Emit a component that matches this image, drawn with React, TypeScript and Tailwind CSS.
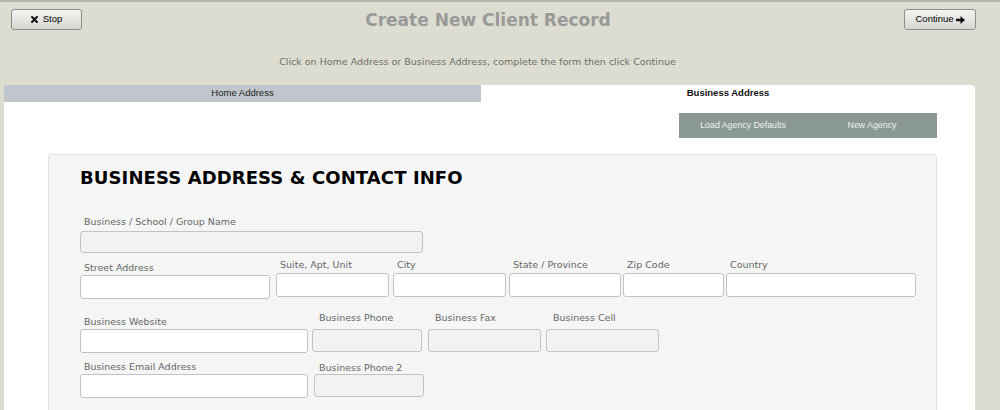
import React from 'react';

const verdana = "font-['Verdana','DejaVu_Sans',sans-serif]";
const arial = "font-['Liberation_Sans',Arial,sans-serif]";

const Field: React.FC<{
  label: string;
  w: string;
  gray?: boolean;
  h?: string;
  lx?: string;
  lmb?: string;
  className?: string;
}> = ({ label, w, gray, h = 'h-[24px]', lx = 'pl-[4px]', lmb = 'mb-[3px]', className = '' }) => (
  <div className={`flex flex-col ${className}`}>
    <div className={`${lx} ${lmb} text-[9.5px] leading-[12px] text-[#666] whitespace-nowrap`}>{label}</div>
    <div className={`${w} ${h} rounded-[3px] border border-[#c3c3c3] ${gray ? 'bg-[#f2f2f2]' : 'bg-white'}`} />
  </div>
);

export default function App() {
  return (
    <div className={`w-[1000px] h-[410px] overflow-hidden bg-[#dcddd0] border-t-2 border-[#b4b5ab] ${verdana}`}>
      <div className="flex items-center pl-[11px] pr-[24px] pt-[6px]">
        <button className={`w-[71px] h-[21px] shrink-0 rounded-[3px] border border-[#8c8c88] bg-gradient-to-b from-[#f4f4f2] to-[#d6d6d2] flex items-center justify-center gap-[5px] text-[9.5px] text-black ${arial}`}>
          <svg width="7" height="7" viewBox="0 0 10 10">
            <path d="M1.5 1.5 L8.5 8.5 M8.5 1.5 L1.5 8.5" stroke="#111" strokeWidth="3" strokeLinecap="round" />
          </svg>
          Stop
        </button>
        <h1 className="flex-1 text-center text-[17px] leading-[22px] font-bold text-[#999999] mr-[10px] mt-[1px]">
          Create New Client Record
        </h1>
        <button className={`w-[72px] h-[21px] shrink-0 rounded-[3px] border border-[#8c8c88] bg-gradient-to-b from-[#f4f4f2] to-[#d6d6d2] flex items-center justify-center gap-[2px] text-[9.5px] text-black ${arial}`}>
          Continue
          <svg width="9" height="8" viewBox="0 0 10 9">
            <path d="M0 3 H5 V0 L10 4.5 L5 9 V6 H0 Z" fill="#111" />
          </svg>
        </button>
      </div>

      <p className="text-center text-[9.5px] leading-[12px] text-[#6e6e68] mt-[25px] ml-[-45px]">
        Click on Home Address or Business Address, complete the form then click Continue
      </p>

      <div className="ml-[4px] mt-[17px] w-[971px] bg-white rounded-tr-[4px] pb-[20px]">
        <div className={`flex h-[17px] text-[9.5px] ${arial}`}>
          <div className="w-[477px] bg-[#c0c6cc] flex items-center justify-center text-[#222]">Home Address</div>
          <div className="flex-1 flex items-center justify-center font-bold text-[#111]">Business Address</div>
        </div>

        <div className="flex justify-end mr-[38px] mt-[11px]">
          <div className={`w-[258px] h-[25px] bg-[#899893] flex items-center text-[8.8px] text-[#eef0ee] ${arial}`}>
            <span className="w-[128px] text-center">Load Agency Defaults</span>
            <span className="w-[130px] text-center">New Agency</span>
          </div>
        </div>

        <div className="ml-[44px] mr-[38px] mt-[16px] bg-[#f5f5f5] border border-[#e2e2e2] rounded-[3px] pl-[31px] pt-[11px] pb-[20px]">
          <h2 className="text-[18px] font-bold text-black leading-[24px] tracking-[0.1px]">
            BUSINESS ADDRESS &amp; CONTACT INFO
          </h2>

          <div className="mt-[26px]">
            <Field label="Business / School / Group Name" w="w-[343px]" h="h-[22px]" gray />

            <div className="flex items-end mt-[6px]">
              <Field label="Street Address" w="w-[190px]" lmb="mb-[1px]" />
              <Field label="Suite, Apt, Unit" w="w-[113px]" lmb="mb-[2px]" className="ml-[6px] mb-[2px]" />
              <Field label="City" w="w-[113px]" lmb="mb-[2px]" className="ml-[4px] mb-[2px]" />
              <Field label="State / Province" w="w-[112px]" lmb="mb-[2px]" className="ml-[3px] mb-[2px]" />
              <Field label="Zip Code" w="w-[101px]" lmb="mb-[2px]" className="ml-[2px] mb-[2px]" />
              <Field label="Country" w="w-[190px]" lmb="mb-[2px]" className="ml-[2px] mb-[2px]" />
            </div>

            <div className="flex items-end mt-[13px]">
              <Field label="Business Website" w="w-[228px]" lmb="mb-[1px]" />
              <Field label="Business Phone" w="w-[110px]" h="h-[23px]" gray lx="pl-[7px]" lmb="mb-[5px]" className="ml-[4px] mb-[1px]" />
              <Field label="Business Fax" w="w-[113px]" h="h-[23px]" gray lx="pl-[7px]" lmb="mb-[5px]" className="ml-[6px] mb-[1px]" />
              <Field label="Business Cell" w="w-[113px]" h="h-[23px]" gray lx="pl-[7px]" lmb="mb-[5px]" className="ml-[5px] mb-[1px]" />
            </div>

            <div className="flex items-end mt-[8px]">
              <Field label="Business Email Address" w="w-[228px]" lmb="mb-[1px]" />
              <Field label="Business Phone 2" w="w-[110px]" h="h-[23px]" gray lx="pl-[5px]" lmb="mb-0" className="ml-[6px] mb-[1px]" />
            </div>
          </div>
        </div>
      </div>
    </div>
  );
}
